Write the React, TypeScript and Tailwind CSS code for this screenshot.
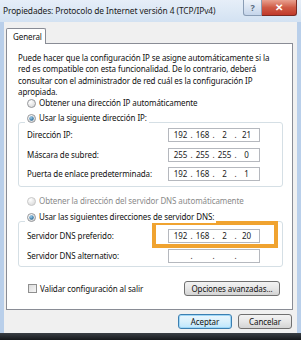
import React from "react";

const font = { fontFamily: '"Noto Sans", "Open Sans", sans-serif' };

function Radio({ checked, disabled }: { checked?: boolean; disabled?: boolean }) {
  return (
    <svg width="9" height="9" viewBox="0 0 9 9" className="shrink-0">
      <defs>
        <radialGradient id="rg" cx="0.35" cy="0.3" r="0.8">
          <stop offset="0" stopColor="#ffffff" />
          <stop offset="1" stopColor="#d6d6d6" />
        </radialGradient>
        <radialGradient id="rdot" cx="0.4" cy="0.35" r="0.7">
          <stop offset="0" stopColor="#9fd0f0" />
          <stop offset="1" stopColor="#1d5f8f" />
        </radialGradient>
      </defs>
      <circle cx="4.5" cy="4.5" r="4" fill="url(#rg)" stroke={disabled ? "#c4c4c4" : "#8c8f94"} strokeWidth="0.9" />
      {checked && <circle cx="4.5" cy="4.5" r="2.2" fill="url(#rdot)" />}
    </svg>
  );
}

function IpBox({ values }: { values: string[] }) {
  return (
    <div className="w-[92px] h-[14px] border border-[#b5b8be] bg-white flex items-center px-[2px] text-[8px] text-[#1a1a1a]">
      {values.map((v, i) => (
        <React.Fragment key={i}>
          <span className="w-[19px] text-center">{v}</span>
          {i < 3 && <span className="w-[3px] text-center">.</span>}
        </React.Fragment>
      ))}
    </div>
  );
}

function Row({ label, values }: { label: string; values: string[] }) {
  return (
    <div className="flex items-center h-[14px]">
      <span className="w-[141px]">{label}</span>
      <IpBox values={values} />
    </div>
  );
}

function GroupHead({ text }: { text: string }) {
  return (
    <div className="relative z-10 h-[12px] flex ml-[7px]">
      <div className="flex items-center gap-[3px] bg-white px-[2px]">
        <Radio checked />
        <span>{text}</span>
      </div>
    </div>
  );
}

export default function App() {
  return (
    <div
      className="relative w-[301px] h-[340px] overflow-hidden flex flex-col bg-[#b9cfea] text-[8px] tracking-[-0.1px] text-[#111]"
      style={font}
    >
      {/* Title bar */}
      <div className="h-[22px] flex items-start bg-gradient-to-b from-[#e6eef8] to-[#d3e2f2]">
        <div className="flex-1 min-w-0 overflow-hidden pl-[3px] pt-[5px] text-[8.4px] text-[#1a1a1a] whitespace-nowrap">
          Propiedades: Protocolo de Internet versión 4 (TCP/IPv4)
        </div>
        <div className="flex shrink-0 mr-[4px]">
          <div className="w-[19px] h-[16px] rounded-bl-[3px] border border-t-0 border-[#8a9db5] bg-gradient-to-b from-[#eef3fa] to-[#c5d5ea] flex items-center justify-center text-[9px] font-bold text-[#5a6b80]">
            ?
          </div>
          <div className="w-[35px] h-[16px] rounded-br-[3px] border border-l-0 border-t-0 border-[#7a2a22] bg-gradient-to-b from-[#e8a08f] via-[#cf5a45] to-[#c0392b] flex items-center justify-center text-[10px] font-bold text-white">
            ✕
          </div>
        </div>
      </div>

      {/* Body */}
      <div className="flex-1 flex flex-col ml-[4px] mr-[4px] bg-[#f0f0f0] pl-[2px] pr-[4px] pt-[6px]">
        {/* Tab */}
        <div className="flex">
          <div className="relative z-10 w-[40px] h-[16px] border border-b-0 border-[#898c95] bg-white rounded-t-[2px] pl-[6px] pt-[2px]">
            General
          </div>
        </div>
        {/* Panel */}
        <div className="-mt-[1px] h-[267px] border border-[#898c95] bg-white pl-[11px] pr-[9px] pt-[8px] flex flex-col">
          <p className="leading-[11.3px] w-[262px]">
            Puede hacer que la configuración IP se asigne automáticamente si la red es compatible con esta funcionalidad. De lo contrario, deberá consultar con el administrador de red cuál es la configuración IP apropiada.
          </p>
          <div className="flex items-center gap-[3px] ml-[9px] h-[12px]">
            <Radio />
            <span>Obtener una dirección IP automáticamente</span>
          </div>

          <div className="mt-[3px]">
            <GroupHead text="Usar la siguiente dirección IP:" />
            <div className="-mt-[2px] w-[265px] border border-[#d5dfe5] rounded-[3px] pl-[8px] pr-[8px] pt-[5px] pb-[5px] flex flex-col gap-[5.5px]">
              <Row label="Dirección IP:" values={["192", "168", "2", "21"]} />
              <Row label="Máscara de subred:" values={["255", "255", "255", "0"]} />
              <Row label="Puerta de enlace predeterminada:" values={["192", "168", "2", "1"]} />
            </div>
          </div>

          <div className="flex items-center gap-[3px] ml-[9px] mt-[8px] h-[12px] text-[#8a8a8a]">
            <Radio disabled />
            <span>Obtener la dirección del servidor DNS automáticamente</span>
          </div>

          <div className="mt-[4px]">
            <GroupHead text="Usar las siguientes direcciones de servidor DNS:" />
            <div className="-mt-[2px] w-[265px] border border-[#d5dfe5] rounded-[3px] pl-[8px] pr-[8px] pt-[7px] pb-[3px] flex flex-col gap-[6px]">
              <Row label="Servidor DNS preferido:" values={["192", "168", "2", "20"]} />
              <Row label="Servidor DNS alternativo:" values={["", "", "", ""]} />
            </div>
          </div>

          <div className="flex items-center justify-between mt-[14px] pl-[10px] pr-[3px]">
            <div className="flex items-center gap-[3px]">
              <div className="w-[9px] h-[9px] border border-[#8f8f8f] bg-gradient-to-br from-[#dcdcdc] to-[#f6f6f6]" />
              <span>Validar configuración al salir</span>
            </div>
            <div className="w-[96px] h-[15px] rounded-[3px] border border-[#707070] bg-gradient-to-b from-[#f3f3f3] via-[#e6e6e6] to-[#d4d4d4] flex items-center justify-center">
              Opciones avanzadas...
            </div>
          </div>
        </div>

        {/* Bottom buttons */}
        <div className="flex justify-end gap-[6px] mt-[4px] pr-[1px]">
          <div className="w-[54px] h-[15px] rounded-[3px] border border-[#3c7fb1] bg-gradient-to-b from-[#eaf6fd] via-[#d9f0fc] to-[#bee6fd] flex items-center justify-center shadow-[inset_0_0_0_1px_#9fd7f7]">
            Aceptar
          </div>
          <div className="w-[54px] h-[15px] rounded-[3px] border border-[#707070] bg-gradient-to-b from-[#f3f3f3] via-[#e6e6e6] to-[#d4d4d4] flex items-center justify-center">
            Cancelar
          </div>
        </div>
      </div>

      {/* Bottom dark frame */}
      <div className="h-[7px] bg-gradient-to-b from-[#3a3f45] to-[#15181b]" />

      {/* Orange highlight */}
      <div className="absolute left-[152px] top-[221px] w-[126px] h-[27px] border-[4px] border-[#f0a330]" />
    </div>
  );
}
